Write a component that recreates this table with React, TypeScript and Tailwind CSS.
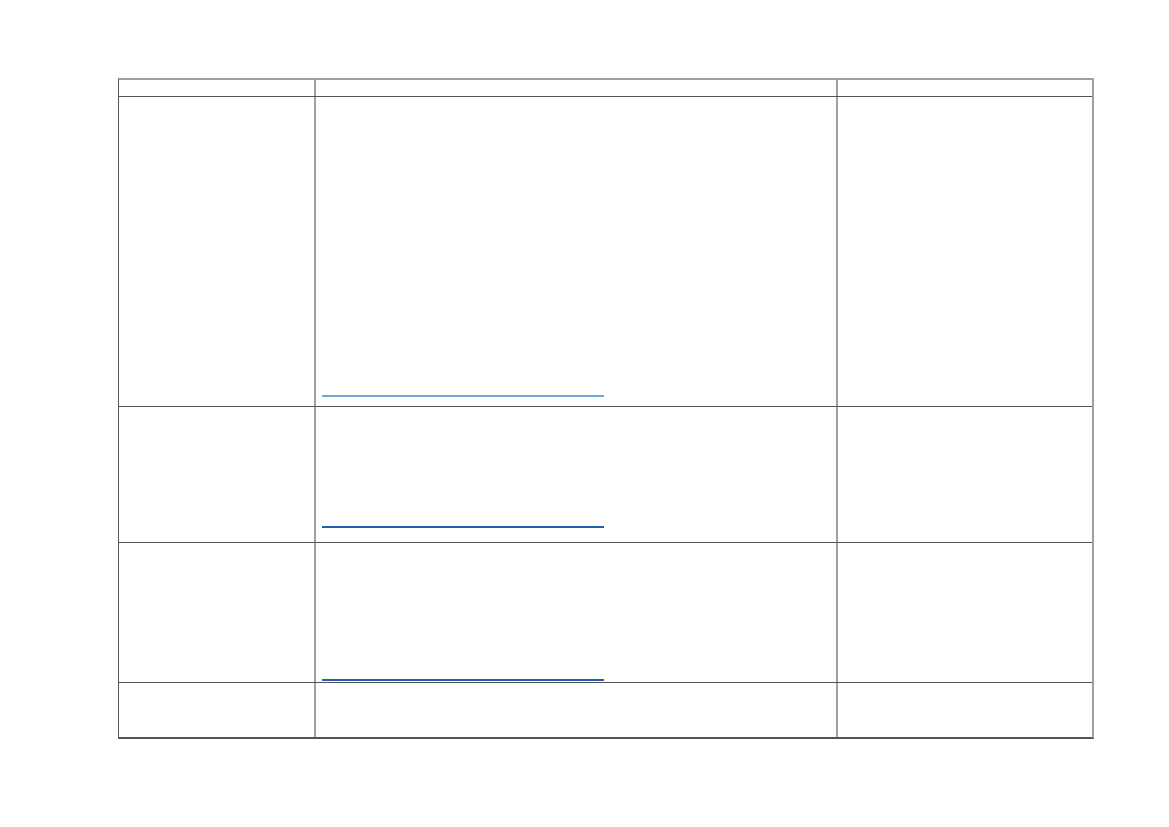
import React from "react";

function Row({
  h,
  line,
  pb,
  color,
  last,
}: {
  h: string;
  line?: boolean;
  pb?: string;
  color?: string;
  last?: boolean;
}) {
  return (
    <div className={`grid grid-cols-[197px_522px_1fr] ${h} ${last ? "" : "border-b-[1.5px] border-b-[#555555]"}`}>
      <div className="border-r-2 border-r-[#a0a0a0]" />
      <div className={`border-r-2 border-r-[#a0a0a0] flex flex-col justify-end pl-[6px] ${pb ?? ""}`}>
        {line ? <div className={`w-[282px] ${color}`} /> : null}
      </div>
      <div />
    </div>
  );
}

export default function App() {
  return (
    <div className="min-h-[827px] w-[1169px] bg-white pt-[78px] pl-[118px] font-['Liberation_Sans',sans-serif]">
      <div className="w-[976px] border-l-[1.5px] border-l-[#555555] border-r-2 border-r-[#a0a0a0] border-t-2 border-t-[#a0a0a0] border-b-2 border-b-[#555555]">
        <div className="grid grid-cols-[197px_522px_1fr] h-[17px] border-b-[1.5px] border-b-[#555555]">
          <div className="border-r-2 border-r-[#a0a0a0]" />
          <div className="border-r-2 border-r-[#a0a0a0]" />
          <div />
        </div>
        <Row h="h-[310px]" line pb="pb-[9px]" color="h-[2px] bg-[#6fa8dc]" />
        <Row h="h-[136px]" line pb="pb-[14.5px]" color="h-[1.5px] bg-[#1f5fad]" />
        <Row h="h-[140px]" line pb="pb-[1px]" color="h-[2px] bg-[#2a5db0]" />
        <Row h="h-[54px]" last />
      </div>
    </div>
  );
}
